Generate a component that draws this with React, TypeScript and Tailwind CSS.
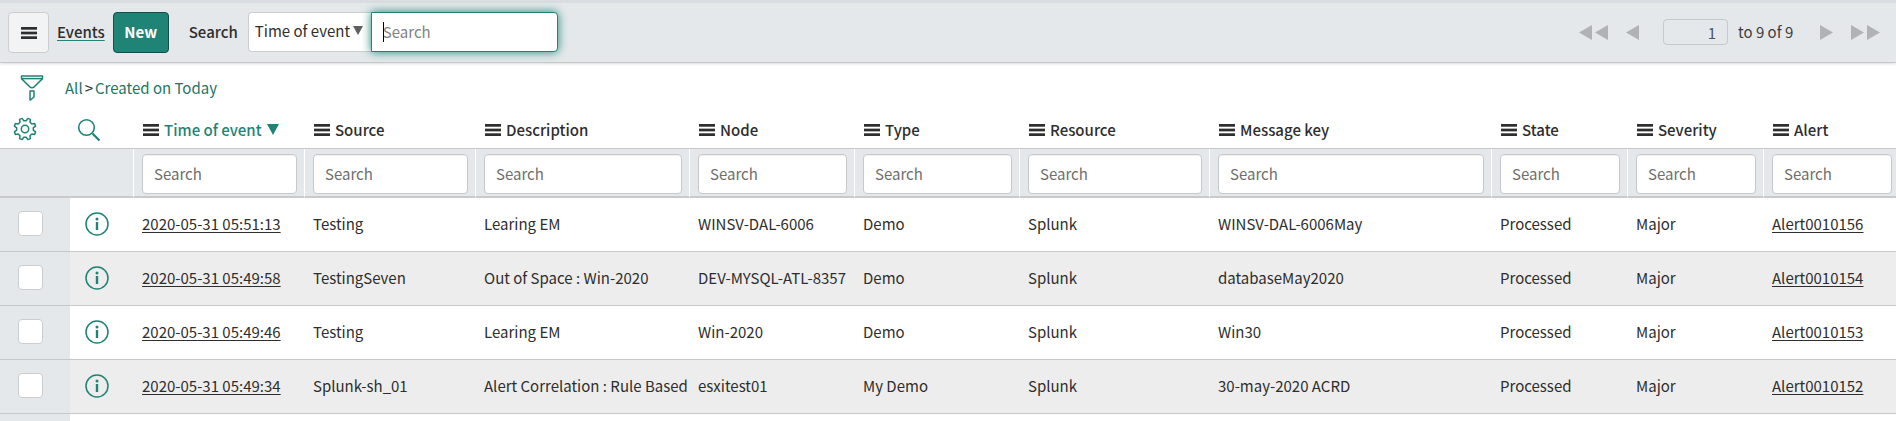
import React from 'react';
import clsx from 'clsx';

interface Column {
  key: keyof EventRow;
  label: string;
  width: string;
  sorted?: boolean;
}

interface EventRow {
  time: string;
  source: string;
  description: string;
  node: string;
  type: string;
  resource: string;
  messageKey: string;
  state: string;
  severity: string;
  alert: string;
}

const COLUMNS: Column[] = [
  { key: 'time', label: 'Time of event', width: 'w-[171px]', sorted: true },
  { key: 'source', label: 'Source', width: 'w-[171px]' },
  { key: 'description', label: 'Description', width: 'w-[214px]' },
  { key: 'node', label: 'Node', width: 'w-[165px]' },
  { key: 'type', label: 'Type', width: 'w-[165px]' },
  { key: 'resource', label: 'Resource', width: 'w-[190px]' },
  { key: 'messageKey', label: 'Message key', width: 'w-[282px]' },
  { key: 'state', label: 'State', width: 'w-[136px]' },
  { key: 'severity', label: 'Severity', width: 'w-[136px]' },
  { key: 'alert', label: 'Alert', width: 'w-[132px]' },
];

const ROWS: EventRow[] = [
  { time: '2020-05-31 05:51:13', source: 'Testing', description: 'Learing EM', node: 'WINSV-DAL-6006', type: 'Demo', resource: 'Splunk', messageKey: 'WINSV-DAL-6006May', state: 'Processed', severity: 'Major', alert: 'Alert0010156' },
  { time: '2020-05-31 05:49:58', source: 'TestingSeven', description: 'Out of Space : Win-2020', node: 'DEV-MYSQL-ATL-8357', type: 'Demo', resource: 'Splunk', messageKey: 'databaseMay2020', state: 'Processed', severity: 'Major', alert: 'Alert0010154' },
  { time: '2020-05-31 05:49:46', source: 'Testing', description: 'Learing EM', node: 'Win-2020', type: 'Demo', resource: 'Splunk', messageKey: 'Win30', state: 'Processed', severity: 'Major', alert: 'Alert0010153' },
  { time: '2020-05-31 05:49:34', source: 'Splunk-sh_01', description: 'Alert Correlation : Rule Based', node: 'esxitest01', type: 'My Demo', resource: 'Splunk', messageKey: '30-may-2020 ACRD', state: 'Processed', severity: 'Major', alert: 'Alert0010152' },
];

function MenuIcon() {
  return (
    <svg width="16" height="12" viewBox="0 0 16 12" className="shrink-0" fill="#2e2e2e" aria-hidden="true">
      <rect width="16" height="2.7" />
      <rect y="4.65" width="16" height="2.7" />
      <rect y="9.3" width="16" height="2.7" />
    </svg>
  );
}

function FunnelIcon() {
  return (
    <svg width="24" height="26" viewBox="0 0 24 26" fill="none" stroke="#1f8476" strokeWidth="1.5" strokeLinejoin="round" aria-hidden="true">
      <path d="M1.5 1h21v2.600l-8.200 8.200q-2.300 1.800-4.600 0L1.500 3.600z" />
      <path d="M1.500 3.600h21" />
      <path d="M10 16h4v6l-3.500 3H10z" />
    </svg>
  );
}

function GearIcon() {
  return (
    <svg width="24" height="24" viewBox="0 0 24 24" fill="none" stroke="#1f8476" strokeWidth="1.5" strokeLinejoin="round" aria-hidden="true">
      <path d="M20.300 13.200 22.600 14.900 21.600 17.400 18.800 17 17 18.800 17.400 21.600 14.900 22.600 13.200 20.300H10.800L9.100 22.600 6.600 21.600 7 18.800 5.200 17 2.400 17.400 1.400 14.900 3.700 13.200V10.800L1.400 9.100 2.400 6.600 5.200 7 7 5.200 6.600 2.400 9.100 1.400 10.800 3.700H13.200L14.900 1.400 17.400 2.400 17 5.200 18.800 7 21.600 6.600 22.600 9.100 20.300 10.800z" />
      <circle cx="12" cy="12" r="3.700" />
    </svg>
  );
}

function SearchIcon() {
  return (
    <svg width="24" height="24" viewBox="0 0 24 24" fill="none" stroke="#1f8476" aria-hidden="true">
      <circle cx="9.500" cy="9.500" r="7.800" strokeWidth="1.600" />
      <path d="M15.500 15.500l7 7" strokeWidth="2.200" />
    </svg>
  );
}

function InfoIcon() {
  return (
    <svg width="24" height="24" viewBox="0 0 24 24" fill="none" stroke="#1f8476" aria-hidden="true">
      <circle cx="12" cy="12" r="11" strokeWidth="1.500" />
      <path d="M12 10v8" strokeWidth="2.400" />
      <circle cx="12" cy="7" r="1.500" fill="#1f8476" stroke="none" />
    </svg>
  );
}

function Arrow({ points, width }: { points: string; width: number }) {
  return (
    <svg width={width} height="15" viewBox={`0 0 ${width} 15`} className="block" fill="currentColor" aria-hidden="true">
      <path d={points} />
    </svg>
  );
}

const BACK = 'M13 0v15L0 7.500z';
const BACK_ALL = 'M13 0v15L0 7.500zM29 0v15L16 7.500z';
const NEXT = 'M0 0v15l13-7.500z';
const NEXT_ALL = 'M0 0v15l13-7.500zM16 0v15l13-7.500z';

function Toolbar() {
  return (
    <header className="flex h-[63px] items-center border-t-3 border-b border-t-[#d9dce0] border-b-[#c6c9cc] bg-[#e4e8eb] pr-4 pb-px pl-2 shadow-sm">
      <button aria-label="List menu" className="flex size-[41px] items-center justify-center rounded-[4px] border border-[#cbcdd0] bg-[#f2f3f5] pt-[2px]">
        <MenuIcon />
      </button>
      <a href="#events" className="ml-2 font-medium underline decoration-[#1f8476] underline-offset-2">Events</a>
      <button className="ml-2 h-[41px] w-14 rounded-[4px] border border-[#134f47] bg-[#1f8476] font-bold text-white">New</button>
      <label htmlFor="search-field" className="ml-5 font-medium">Search</label>
      <div className="relative ml-[10px]">
        <select
          id="search-field"
          className="block h-10 w-[123px] appearance-none rounded-l-[4px] border border-r-0 border-[#cbcdd0] bg-white pb-[2px] pl-[6px]"
        >
          <option>Time of event</option>
        </select>
        <svg width="10" height="9" viewBox="0 0 10 9" className="pointer-events-none absolute top-[14px] right-2" fill="#5f5f5f" aria-hidden="true">
          <path d="M0 0h10L5 9z" />
        </svg>
      </div>
      <div className="relative">
        <input
          type="text"
          placeholder="Search"
          aria-label="Search text"
          className="block h-10 w-[187px] rounded-r-[4px] border border-[#1f8476] bg-white px-[11px] pb-[2px] shadow-[0_0_10px_#1f8476] outline-none placeholder:text-[#828282]"
        />
        <span className="absolute top-[10px] left-3 h-5 w-px bg-black" />
      </div>

      <nav className="ml-auto flex items-center text-[#b0b2b4]" aria-label="Pages">
        <button aria-label="First page"><Arrow points={BACK_ALL} width={29} /></button>
        <button aria-label="Previous page" className="ml-[18px]"><Arrow points={BACK} width={13} /></button>
        <input
          type="text"
          defaultValue="1"
          aria-label="First row"
          className="ml-6 h-[26px] w-[65px] rounded-[4px] border border-[#c6c9cc] bg-transparent pr-[11px] text-right text-[#485566]"
        />
        <span className="ml-[10px] w-[82px] text-[#3c3c3c]">to 9 of 9</span>
        <button aria-label="Next page"><Arrow points={NEXT} width={13} /></button>
        <button aria-label="Last page" className="ml-[18px]"><Arrow points={NEXT_ALL} width={29} /></button>
      </nav>
    </header>
  );
}

export default function App() {
  return (
    <div className="bg-white font-['Noto_Sans_CJK_SC','Open_Sans',sans-serif] text-[15px] leading-5 text-[#2e2e2e]">
      <Toolbar />

      <div className="flex h-[50px] items-center pl-5">
        <button aria-label="Filter"><FunnelIcon /></button>
        <div className="ml-[21px] flex gap-[2px] text-[#1f7468]">
          <a href="#all">All</a>
          <span className="text-[#2e2e2e]">&gt;</span>
          <a href="#today">Created on Today</a>
        </div>
      </div>

      <table className="w-full table-fixed border-separate border-spacing-0 text-left">
        <colgroup>
          <col className="w-[70px]" />
          <col className="w-16" />
          {COLUMNS.map(col => <col key={col.key} className={col.width} />)}
        </colgroup>
        <thead>
          <tr className="h-9">
            <th className="border-b border-[#c6c9cc] pb-1 pl-[13px]">
              <button aria-label="Settings" className="block"><GearIcon /></button>
            </th>
            <th className="border-b border-[#c6c9cc] pb-[2px] pl-[7px]">
              <button aria-label="Toggle search row" className="block"><SearchIcon /></button>
            </th>
            {COLUMNS.map(col => (
              <th key={col.key} className="border-b border-[#c6c9cc] pb-[2px] pl-[9px] font-medium">
                <div className={clsx('flex items-center gap-[5px] whitespace-nowrap', col.sorted && 'text-[#1f8476]')}>
                  <MenuIcon />
                  {col.label}
                  {col.sorted && (
                    <svg width="12" height="11" viewBox="0 0 12 11" fill="#1f8476" aria-hidden="true">
                      <path d="M0 0h12L6 11z" />
                    </svg>
                  )}
                </div>
              </th>
            ))}
          </tr>
          <tr className="bg-[#e4e8eb]">
            <td colSpan={2} className="border-r border-b-2 border-r-white border-b-[#c8cacc]" />
            {COLUMNS.map(col => (
              <td
                key={col.key}
                className="border-r border-b-2 border-r-white border-b-[#c8cacc] pt-[5px] pr-[7px] pb-[2px] pl-2 last:border-r-0 last:pr-1"
              >
                <input
                  type="text"
                  placeholder="Search"
                  aria-label={col.label}
                  className="block h-10 w-full rounded-[4px] border border-[#c6c9cc] bg-white px-[11px] pb-[2px] inset-shadow-2xs placeholder:text-[#6e6e6e]"
                />
              </td>
            ))}
          </tr>
        </thead>
        <tbody>
          {ROWS.map(row => (
            <tr key={row.time} className="h-[54px] even:bg-[#ededed]">
              <td className="border-b border-[#c6c9cc] bg-[#e4e8eb] pb-[2px] pl-[18px]">
                <input
                  type="checkbox"
                  aria-label={row.alert}
                  className="block size-[25px] appearance-none rounded-[4px] border border-[#cbcdd0] bg-white"
                />
              </td>
              <td className="border-b border-[#c6c9cc] pb-[2px] pl-[15px]">
                <button aria-label="Preview" className="block"><InfoIcon /></button>
              </td>
              {COLUMNS.map(({ key }) => (
                <td key={key} className="border-b border-[#c6c9cc] pb-[2px] pl-2 whitespace-nowrap">
                  {key === 'time' || key === 'alert' ? (
                    <a href={`#${row.alert}`} className="underline underline-offset-2">{row[key]}</a>
                  ) : (
                    row[key]
                  )}
                </td>
              ))}
            </tr>
          ))}
          <tr className="h-[7px]">
            <td className="bg-[#e4e8eb]" />
            <td colSpan={11} />
          </tr>
        </tbody>
      </table>
    </div>
  );
}
